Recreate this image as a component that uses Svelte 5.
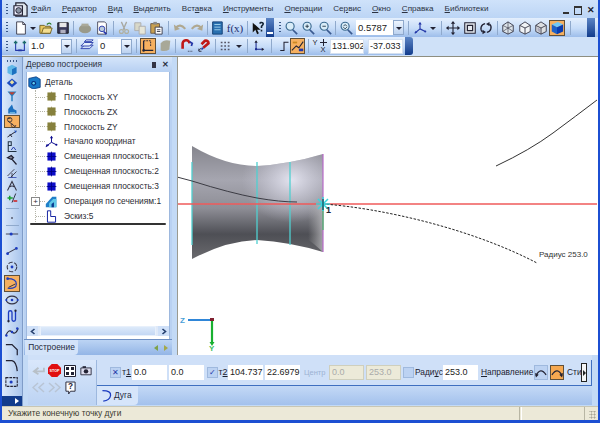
<script>
	// icon bodies, all on a 16x16 box
	const icons = {
		app: '<path d="M3 1h9l3 3v11H3z" fill="#dfe6ee" stroke="#223" stroke-width="1.3"/><path d="M1 4h9v10H1z" fill="#eef" stroke="#223" stroke-width="1.3"/><circle cx="6" cy="9" r="3" fill="#8a94a4" stroke="#223"/>',
		new: '<path d="M3 1h7l3 3v11H3z" fill="#fff" stroke="#334"/><path d="M10 1v3h3" fill="none" stroke="#334"/>',
		open: '<path d="M1 5h5l1 1h6v8H1z" fill="#e8c860" stroke="#6a5a20"/><path d="M3 14l2-6h10l-2 6z" fill="#f4de90" stroke="#6a5a20"/><path d="M9 4q3-3 5 0" fill="none" stroke="#2a7a2a" stroke-width="1.5"/>',
		save: '<path d="M2 2h12v12H2z" fill="#3a3a5a" stroke="#111"/><path d="M4 2h8v5H4z" fill="#e8e8e8"/><path d="M5 10h6v4H5z" fill="#b0b0c0"/>',
		gray: '<ellipse cx="8" cy="9" rx="7" ry="5" fill="#9a9a8a"/><path d="M4 6h8V3H4z" fill="#aaa99a"/>',
		preview: '<path d="M3 1h8l2 2v12H3z" fill="#fff" stroke="#445"/><circle cx="8" cy="9" r="3.2" fill="#bcd" stroke="#23a"/><path d="M10 12l3 3" stroke="#23a" stroke-width="2"/>',
		cut: '<path d="M5 1l4 9M11 1L7 10" stroke="#a8a8a0" stroke-width="1.5"/><circle cx="5" cy="12" r="2.2" fill="none" stroke="#b0b0a0" stroke-width="1.4"/><circle cx="11" cy="12" r="2.2" fill="none" stroke="#b0b0a0" stroke-width="1.4"/>',
		copy: '<path d="M2 2h7v9H2z" fill="#d8d8c8" stroke="#aaa"/><path d="M7 6h7v9H7z" fill="#e6e6d8" stroke="#aaa"/>',
		paste: '<path d="M2 3h10v11H2z" fill="#c8a050" stroke="#654"/><path d="M5 1h4v3H5z" fill="#888"/><path d="M7 7h8v8H7z" fill="#fff" stroke="#334"/><path d="M9 10h4M9 12h4" stroke="#334"/>',
		undo: '<path d="M3 8q5-6 11 1" fill="none" stroke="#b0a890" stroke-width="2.4"/><path d="M1 4l1 7 6-2z" fill="#b0a890"/>',
		redo: '<path d="M13 8q-5-6-11 1" fill="none" stroke="#b0a890" stroke-width="2.4"/><path d="M15 4l-1 7-6-2z" fill="#b0a890"/>',
		book: '<path d="M3 1h11v14H3z" fill="#2a70b0" stroke="#0f3a70"/><path d="M5 4h7M5 7h7M5 10h7" stroke="#a8d8f0"/>',
		help: '<path d="M2 2v11l3-3 2 5 2-1-2-4h4z" fill="#111"/><path d="M10 3q1-2 3-1t0 3l-1 1v2" fill="none" stroke="#123" stroke-width="1.8"/><path d="M12 10v2" stroke="#123" stroke-width="1.8"/>',
		zoom: '<circle cx="7" cy="6" r="4.6" fill="#d8ecf8" stroke="#3a6a90" stroke-width="1.3"/><path d="M10 10l5 5" stroke="#3a5a90" stroke-width="2"/>',
		zoomin: '<circle cx="7" cy="6" r="4.6" fill="#d8ecf8" stroke="#3a6a90" stroke-width="1.3"/><path d="M10 10l5 5" stroke="#3a5a90" stroke-width="2"/><path d="M5 6h4M7 4v4" stroke="#234"/>',
		zoomout: '<circle cx="7" cy="6" r="4.6" fill="#d8ecf8" stroke="#3a6a90" stroke-width="1.3"/><path d="M10 10l5 5" stroke="#3a5a90" stroke-width="2"/><path d="M5 6h4" stroke="#234"/>',
		zoomall: '<circle cx="7" cy="6" r="4.6" fill="#d8ecf8" stroke="#3a6a90" stroke-width="1.3"/><path d="M10 10l5 5" stroke="#3a5a90" stroke-width="2"/><path d="M5 6l2-2 2 2M5 7l2 2 2-2" fill="none" stroke="#234"/>',
		axes: '<path d="M8 9V2M8 9l6 3M8 9l-6 5" stroke="#2438a8" stroke-width="1.3"/><path d="M6 4l2-3 2 3zM2 14l1-3 2 2z" fill="#2438a8"/><circle cx="14" cy="12" r="1.2" fill="#2438a8"/>',
		move: '<path d="M8 1v14M1 8h14" stroke="#223" stroke-width="1.3"/><path d="M8 0l2.5 3h-5zM8 16l2.5-3h-5zM0 8l3-2.5v5zM16 8l-3-2.5v5z" fill="#223"/>',
		box: '<path d="M2 2h12v12H2z" fill="#e6eaf0" stroke="#223" stroke-width="1.2"/><path d="M5 5h6v6H5z" fill="none" stroke="#223" stroke-width="1.4"/>',
		rotate: '<path d="M7 3a5.5 5.5 0 0 0-3 9.5M9 13a5.5 5.5 0 0 0 3-9.5" fill="none" stroke="#223" stroke-width="1.5"/><path d="M12 1v5l-4-2.5zM4 15v-5l4 2.5z" fill="#223"/>',
		cube1: '<path d="M2 5l6-4 6 4v7l-6 3-6-3z" fill="#dde4ea" stroke="#334" /><path d="M2 5l6 3 6-3M8 8v7M2 12l6-4 6 4M8 1v7" fill="none" stroke="#334" stroke-width=".7"/>',
		cube2: '<path d="M2 5l6-4 6 4v7l-6 3-6-3z" fill="#f0f3f6" stroke="#334"/><path d="M2 5l6 3 6-3M8 8v7" fill="none" stroke="#334"/>',
		cube3: '<path d="M2 5l6-4 6 4v7l-6 3-6-3z" fill="#dcdfe2" stroke="#334"/><path d="M2 5l6 3 6-3M8 8v7" fill="none" stroke="#334"/><path d="M4 7l3 2v4l-3-2z" fill="#aab"/>',
		cube4: '<path d="M2 4l7-3 6 3-7 3z" fill="#70c8f8"/><path d="M2 4l6 3v8l-6-3z" fill="#1c60c8"/><path d="M8 7l7-3v8l-7 3z" fill="#0a3cb0"/>',
		dim: '<path d="M3 5v8h10V5" fill="none" stroke="#2438a8" stroke-width="1.2"/><path d="M1 4h4M3 2v4M11 4h4M13 2v4" stroke="#1a6a6a" stroke-width="1.6"/><path d="M6 13h4" stroke="#2438a8" stroke-width="2"/>',
		layers: '<path d="M1 11l4-4h10l-4 4z" fill="#d0e0f8" stroke="#2438a8"/><path d="M1 8l4-4h10l-4 4z" fill="#e4eefc" stroke="#2438a8"/><path d="M5 3l2-2h8l-2 2z" fill="#e4eefc" stroke="#2438a8"/>',
		grid: '<path d="M3 2v11h11" fill="none" stroke="#223" stroke-width="1.5"/><path d="M3 2h8v7" fill="none" stroke="#223" stroke-dasharray="2 1"/><circle cx="3" cy="13" r="1.5" fill="#223"/>',
		graySolid: '<path d="M3 5q4-5 11-3l-1 10q-5 3-10 1z" fill="#a8a898"/>',
		mag1: '<path d="M3 11V6a4 4 0 0 1 8-1" fill="none" stroke="#c01818" stroke-width="3"/><path d="M11 3l3 2-1 3" stroke="#2438a8" stroke-width="2" fill="none"/><path d="M9 14h1M11 14h1M13 14h1" stroke="#223"/>',
		mag2: '<path d="M6 10l6-5a3 3 0 0 0-4-3l-4 4" fill="none" stroke="#c01818" stroke-width="3"/><path d="M1 13l3-3M1 11v3h3" fill="none" stroke="#223"/><path d="M4 12l2-2" stroke="#2438a8" stroke-width="2"/>',
		dots: '<path d="M2 4h2M6 4h2M10 4h2M2 8h2M6 8h2M10 8h2M2 12h2M6 12h2M10 12h2" stroke="#556" stroke-width="1.8"/>',
		ortho: '<path d="M5 2v10h9" fill="none" stroke="#1a2a90" stroke-width="1.3"/><path d="M3 4l2-3 2 3zM12 10l3 2-3 2z" fill="#223"/><circle cx="5" cy="12" r="1.4" fill="#1a2a90"/>',
		step: '<path d="M3 14h5V3h6" fill="none" stroke="#223" stroke-width="1.4"/>',
		param: '<path d="M1 13l5-5 3 2 5-7" fill="none" stroke="#223" stroke-width="1.2"/><path d="M2 3h5v2H2z" fill="#c82"/><path d="M9 11h5v3H9z" fill="#2438a8"/>',
		// left strip
		s1: '<path d="M2 4l6-3 6 3v8l-6 3-6-3z" fill="#60b8e8"/><path d="M8 7l6-3v8l-6 3z" fill="#1c70c0"/>',
		s2: '<path d="M1 8l7-6 7 6-7 6z" fill="#1c4cc0"/><path d="M5 7l3-3 3 3-3 3z" fill="#e8e0a0"/>',
		s3: '<path d="M2 2h12L9 8v7H7V8z" fill="#2a80c0"/><path d="M4 3h8l-3 3H7z" fill="#c04030"/>',
		s4: '<path d="M3 14V8l5-6 2 6 4 2v4z" fill="#1c70c0"/><path d="M5 13h7" stroke="#a0e0f0"/>',
		s5: '<path d="M2 3h4M3 7l9 7" stroke="#223" stroke-width="1.2"/><circle cx="5" cy="5" r="3" fill="none" stroke="#223"/><path d="M8 10a3 3 0 1 0 5 2" fill="none" stroke="#223"/>',
		s6: '<path d="M2 12l12-8M5 8l3 4" stroke="#223" stroke-width="1.3"/><path d="M11 3l3 1-1 3z" fill="#1c4cc0"/>',
		s7: '<path d="M3 1h4v5H3zM3 6v8h11" fill="none" stroke="#234" stroke-width="1.4"/><path d="M7 12l3-4 3 4" stroke="#2438a8" fill="none" stroke-width="1.3"/>',
		s8: '<path d="M2 5l5-3 3 3-3 2zM8 7l6 7" stroke="#223" stroke-width="1.6" fill="#889"/>',
		s9: '<path d="M2 12L11 3M6 14l8-8" stroke="#445" stroke-width="1.3"/><path d="M3 14h11" stroke="#2438a8"/><path d="M8 8v6" stroke="#223"/>',
		s10: '<path d="M2 14L8 2l6 12M5 9q3-2 6 0" fill="none" stroke="#334" stroke-width="1.4"/>',
		s11: '<path d="M2 8h7M5 5v6" stroke="#18a030" stroke-width="2"/><path d="M8 14L13 2" stroke="#223" stroke-width="1.2"/><path d="M10 12h5" stroke="#d01818" stroke-width="2"/>',
		s12: '<path d="M7 7h2v2H7z" fill="#334"/>',
		s13: '<path d="M1 8h14" stroke="#334"/><circle cx="7" cy="8" r="1.8" fill="#1c3cc0"/>',
		s14: '<path d="M2 11L13 5" stroke="#334" stroke-width="1.2"/><circle cx="3" cy="11" r="1.6" fill="#1c3cc0"/><circle cx="13" cy="5" r="1.6" fill="#1c3cc0"/>',
		s15: '<circle cx="8" cy="8" r="5.5" fill="none" stroke="#334" stroke-dasharray="5 2" stroke-width="1.2"/><circle cx="8" cy="8" r="1.6" fill="#1c3cc0"/>',
		s16: '<path d="M3 3q10 0 10 6T3 14" fill="none" stroke="#1c3cc0" stroke-width="1.3"/><circle cx="3" cy="3" r="1.5" fill="#1c3cc0"/><path d="M4 13l8-4" stroke="#223"/>',
		s17: '<ellipse cx="8" cy="8" rx="6.5" ry="4.5" fill="none" stroke="#334" stroke-width="1.3"/><circle cx="8" cy="8" r="1.5" fill="#1c3cc0"/><circle cx="1.5" cy="8" r="1.2" fill="#1c3cc0"/><circle cx="14.5" cy="8" r="1.2" fill="#1c3cc0"/>',
		s18: '<path d="M4 14V4q0-2 2-2t2 2v8q0 2 2 2t2-2V2" fill="none" stroke="#1c3cc0" stroke-width="1.5"/><circle cx="4" cy="14" r="1.3" fill="#223"/><circle cx="12" cy="2" r="1.3" fill="#223"/>',
		s19: '<path d="M1 12q3-8 7-4t7-4" fill="none" stroke="#223" stroke-width="1.3"/><circle cx="1.6" cy="12" r="1.4" fill="#1c3cc0"/><circle cx="8" cy="8" r="1.4" fill="#1c3cc0"/><circle cx="14" cy="4" r="1.4" fill="#1c3cc0"/>',
		s20: '<path d="M1 3h7l6 6v6" fill="none" stroke="#223" stroke-width="1.4"/>',
		s20b: '<path d="M1 3h7q5 1 6 12" fill="none" stroke="#223" stroke-width="1.4"/>',
		s21: '<path d="M1 3h13v10H1z" fill="none" stroke="#223" stroke-width="1.2" stroke-dasharray="3 1"/><circle cx="7" cy="8" r="1.8" fill="#1c3cc0"/>',
		// tree
		plane: '<path d="M3 3h10v10H3z" fill="#86803c"/><path d="M2 8h12M8 2v12" stroke="#86803c" stroke-width=".8"/>',
		offset: '<path d="M3 3h10v10H3z" fill="#0c0cc8"/><path d="M2 8h12M8 2v12" stroke="#000080"/>',
		origin: '<path d="M8 9V2M8 9l6 3M8 9l-7 5" stroke="#0c0c90" stroke-width="1.2"/><path d="M6 4l2-3 2 3zM1 15l1-4 3 2z" fill="#0c0c90"/><circle cx="14" cy="12" r="1.3" fill="#0c0c90"/>',
		loft: '<path d="M1 15V11L9 2h5v13z" fill="#1f7fc8"/><path d="M5 15V10l5-5h4v10z" fill="#60c8e8"/><path d="M8 15v-4l3-2v6z" fill="#0a3a90"/>',
		sketch: '<path d="M3 1h4v7h6v7H3z" fill="none" stroke="#1020a0" stroke-width="1.2"/>',
		part: '<path d="M1 3l9-2 5 3v10l-9 2-5-3z" fill="#1878c8" stroke="#0a3a80"/><circle cx="7" cy="9" r="3" fill="#083080"/><circle cx="7" cy="9" r="1.5" fill="#60d0f0"/>',
		arc: '<path d="M3 2q11 0 10 6t-9 7" fill="none" stroke="#1c3cc0" stroke-width="1.6"/>'
	};

	const menu = [
		['Ф', 'айл'], ['Р', 'едактор'], ['В', 'ид'], ['В', 'ыделить'], ['Вст', 'авка', 'а'], ['И', 'нструменты'],
		['О', 'перации'], ['Се', 'рвис', 'р'], ['О', 'кно'], ['С', 'правка'], ['Б', 'иблиотеки']
	];

	// s = separator, d = dropdown arrow, g = grip, x = blank
	const bar1 = [
		['g', 5], ['x', 3], ['new', 18], ['d', 6], ['open', 20], ['save', 14], ['s', 6], ['gray', 18], ['preview', 16], ['s', 6],
		['cut', 16], ['copy', 16], ['paste', 16], ['s', 8], ['undo', 16], ['redo', 18], ['s', 2], ['book', 18], ['fx', 18], ['s', 6],
		['help', 16]
	];
	const bar1b = [['zoom', 17], ['zoomin', 17], ['zoomout', 17], ['s', 4], ['x', 2], ['zoomall', 14], ['x', 3]];
	const bar1c = [
		['s', 8], ['axes', 16], ['d', 10], ['s', 6], ['move', 17], ['box', 17], ['rotate', 16], ['s', 6],
		['cube1', 16], ['cube2', 17], ['cube3', 16], ['cube4', 16, true], ['s', 10]
	];
	const bar2a = [['g', 5], ['x', 1], ['dim', 19]];
	const bar2b = [['s', 8], ['layers', 14], ['x', 4]];
	const bar2c = [
		['s', 8], ['grid', 16, true], ['x', 1], ['graySolid', 16], ['s', 5], ['mag1', 17], ['mag2', 19], ['s', 3], ['dots', 18], ['d', 8], ['s', 9],
		['ortho', 13], ['s', 13], ['step', 12], ['param', 15, true], ['s', 6]
	];

	const stripTop = ['s1', 's2', 's3', 's4', 's5', 's6', 's7', 's8', 's9', 's10', 's11'];
	const stripLow = ['s13', 's14', 's15', 's16', 's17', 's18', 's19', 's20', 's20b', 's21'];

	const tree = [
		['plane', 'Плоскость XY'], ['plane', 'Плоскость ZX'], ['plane', 'Плоскость ZY'], ['origin', 'Начало координат'],
		['offset', 'Смещенная плоскость:1'], ['offset', 'Смещенная плоскость:2'], ['offset', 'Смещенная плоскость:3'],
		['loft', 'Операция по сечениям:1', true], ['sketch', 'Эскиз:5']
	];
</script>

{#snippet ic(name, size = 14)}
	<svg width={size} height={size} viewBox="0 0 16 16">{@html icons[name]}</svg>
{/snippet}

{#snippet tool(t)}
	{#if t[0] === 's'}
		<span class="sep" style="width:{t[1]}px"></span>
	{:else if t[0] === 'g'}
		<span class="grip" style="width:{t[1]}px"></span>
	{:else if t[0] === 'd'}
		<span class="drop" style="width:{t[1]}px"></span>
	{:else if t[0] === 'x'}
		<span class="blank" style="width:{t[1]}px"></span>
	{:else if t[0] === 'fx'}
		<span class="fx" style="width:{t[1]}px">f(x)</span>
	{:else}
		<span class={['tb', t[2] && 'on']} style="width:{t[1]}px">{@render ic(t[0])}</span>
	{/if}
{/snippet}

{#snippet combo(value, w)}
	<span class="combo"><span class="field" style="width:{w}px">{value}</span><span class="cbtn"></span></span>
{/snippet}

<div class="win">
	<header class="menubar">
		<span class="grip g1"></span>
		<span class="appicon">{@render ic('app', 15)}</span>
		<nav class="menu">
			{#each menu as m}
				{#if m[2] === 'а'}
					<span>Вст<u>а</u>вка</span>
				{:else if m[2] === 'р'}
					<span>Се<u>р</u>вис</span>
				{:else}
					<span><u>{m[0]}</u>{m[1]}</span>
				{/if}
			{/each}
		</nav>
		<div class="winbtns"><span class="wmin"></span><span class="wres"></span><span class="wx">✕</span></div>
	</header>

	<div class="bar bar1">
		{#each bar1 as t}{@render tool(t)}{/each}
		<span class="chev"></span>
		<span class="grip g2"></span>
		{#each bar1b as t}{@render tool(t)}{/each}
		{@render combo('0.5787', 37)}
		{#each bar1c as t}{@render tool(t)}{/each}
		<span class="end endr"></span>
	</div>

	<div class="bar2row">
		<div class="bar bar2">
			{#each bar2a as t}{@render tool(t)}{/each}
			{@render combo('1.0', 32)}
			{#each bar2b as t}{@render tool(t)}{/each}
			{@render combo('0', 23)}
			{#each bar2c as t}{@render tool(t)}{/each}
			<span class="yx"><span>Y</span><svg width="7" height="7" viewBox="0 0 7 7"><path d="M3.5 0v7M0 3.5h7" stroke="#223"/></svg><span class="xl">X</span></span>
			<span class="field coord c1">131.902</span>
			<span class="field coord c2">-37.033</span>
			<span class="end"></span>
		</div>
	</div>

	<div class="body">
		<aside class="strip">
			<div class="stripitems">
				<span class="dots"></span>
				{#each stripTop as s}
					<span class={['sb', s === 's5' && 'on']}>{@render ic(s, 12)}</span>
				{/each}
				<span class="hsep h1"></span>
				<span class="sb">{@render ic('s12', 12)}</span>
				<span class="hsep h2"></span>
				{#each stripLow as s}
					<span class={['sb', 'big', s === 's16' && 'on']}>{@render ic(s, 14)}</span>
				{/each}
			</div>
			<div class="stripfoot">
				<span class="footarr"></span>
			</div>
		</aside>

		<div class="work">
			<div class="top">
				<section class="panel">
					<div class="ptitle">
						<span>Дерево построения</span>
						<span class="pbtns"><b class="pin"></b><b class="px">✕</b></span>
					</div>
					<div class="treebox">
						<div class="tree">
							<div class="root">{@render ic('part', 13)}<span>Деталь</span></div>
							<ul>
								{#each tree as n}
									<li>
										{#if n[2]}<span class="plus">+</span>{/if}
										<span class="ticon">{@render ic(n[0], 13)}</span>
										<span>{n[1]}</span>
									</li>
								{/each}
							</ul>
							<div class="rule"></div>
						</div>
						<div class="hscroll">
							<span class="sarrow"><svg width="6" height="7" viewBox="0 0 6 7"><path d="M4.5 1L1.5 3.5 4.5 6" fill="none" stroke="#26406e" stroke-width="1.6"/></svg></span>
							<span class="thumb"></span>
							<span class="sarrow"><svg width="6" height="7" viewBox="0 0 6 7"><path d="M1.5 1L4.5 3.5 1.5 6" fill="none" stroke="#26406e" stroke-width="1.6"/></svg></span>
						</div>
					</div>
					<div class="tabs">
						<span class="tab">Построение</span>
						<span class="tabnav"><i class="tl"></i><i class="tr"></i></span>
					</div>
				</section>

				<main class="canvas">
					<svg viewBox="177 57 423 303" width="423" height="303">
						<defs>
							<linearGradient id="sh" x1="0" y1="0" x2="0" y2="1">
								<stop offset="0" stop-color="#85858d" />
								<stop offset=".3" stop-color="#a6a6b0" />
								<stop offset=".55" stop-color="#8e8e96" />
								<stop offset=".78" stop-color="#4e4f55" />
								<stop offset="1" stop-color="#6a6a6e" />
							</linearGradient>
							<radialGradient id="hl" cx=".76" cy=".3" r=".38">
								<stop offset="0" stop-color="#e6e6f2" stop-opacity=".95" />
								<stop offset="1" stop-color="#c8c8d8" stop-opacity="0" />
							</radialGradient>
							<linearGradient id="lo" x1="0" y1="0" x2="1" y2="0">
								<stop offset=".55" stop-color="#aaa" stop-opacity="0" />
								<stop offset="1" stop-color="#b8b8bc" stop-opacity=".8" />
							</linearGradient>
						</defs>
						<path d="M192 146Q226 166 257 166Q290 164 323 154V252Q290 242 257 240Q226 241 192 259Z" fill="url(#sh)" />
						<path d="M192 146Q226 166 257 166Q290 164 323 154V252Q290 242 257 240Q226 241 192 259Z" fill="url(#hl)" />
						<path d="M290 230Q305 235 323 252V205H290Z" fill="url(#lo)" />
						<path d="M192 162V245M257 162V244M290 162V245" stroke="#50cfd0" stroke-width="1.3" fill="none" />
						<path d="M323 154V252" stroke="#b86ac8" stroke-width="1.2" />
						<path d="M323 204V230" stroke="#40c060" stroke-width="1.2" />
						<path d="M177 177L192 181Q230 193 257 198Q280 202 297 202" stroke="#3c3c44" stroke-width="1" fill="none" />
						<path d="M177 204H597" stroke="#ef5a5a" stroke-width="1.3" />
						<path d="M496 166Q530 150 553 133T597 100" stroke="#333" stroke-width="1" fill="none" />
						<path d="M323 204C380 208 470 228 537 263" stroke="#222" stroke-width="1" stroke-dasharray="2.5 1.5" fill="none" />
						<path d="M316 204H330M323 197V211M318 199L328 209M328 199L318 209" stroke="#35d8e0" stroke-width="1.5" />
						<path d="M323 199V210" stroke="#123" stroke-width="1" />
						<text x="326" y="213" class="snap">1</text>
						<text x="539" y="257" class="lbl">Радиус 253.0</text>
						<path d="M188 320H211" stroke="#2f86d8" stroke-width="2" />
						<path d="M212 320V343" stroke="#18b030" stroke-width="2.2" />
						<path d="M209.5 342L212 346 214.5 342Z" fill="#18b030" />
						<rect x="210" y="318" width="4" height="3" fill="#802030" />
						<text x="180" y="323" class="ax z">Z</text>
						<text x="209" y="351" class="ax y">Y</text>
					</svg>
				</main>
			</div>

			<section class="props">
				<div class="pleft">
					<div class="prow">
						<svg width="14" height="10" viewBox="0 0 15 11"><path d="M14 2v4H5M8 2L3 6l5 3" fill="none" stroke="#b8c0c8" stroke-width="2"/></svg>
						<svg width="13" height="13" viewBox="0 0 14 14"><path d="M4 0h6l4 4v6l-4 4H4l-4-4V4z" fill="#e01010"/><text x="7" y="8.5" class="stop">STOP</text></svg>
						<svg width="12" height="12" viewBox="0 0 12 12"><path d="M.5.5h11v11H.5z" fill="#fff" stroke="#223"/><path d="M2 2h3v3H2zM7 2h3v3H7zM2 7h3v3H2zM7 7h3v3H7z" fill="#223"/></svg>
						<svg width="12" height="11" viewBox="0 0 14 12"><path d="M1 3h12v8H1z" fill="#dde" stroke="#223"/><circle cx="7" cy="7" r="2.6" fill="#223"/><path d="M3 1h4v2H3z" fill="#223"/></svg>
					</div>
					<div class="prow">
						<svg width="13" height="11" viewBox="0 0 13 11"><path d="M6 1L1 5.500 6 10M12 1L7 5.500 12 10" fill="none" stroke="#b8c4d4" stroke-width="1.5"/></svg>
						<svg width="13" height="11" viewBox="0 0 13 11"><path d="M1 1L6 5.500 1 10M7 1L12 5.500 7 10" fill="none" stroke="#b8c4d4" stroke-width="1.5"/></svg>
						<svg width="11" height="14" viewBox="0 0 12 15"><path d="M1 1h10v10H6l-2 3v-3H1z" fill="#fff" stroke="#223"/><text x="6" y="9" class="q">?</text></svg>
					</div>
				</div>
				<div class="pright">
					<div class="fields">
						<span class="check">✕</span><span class="t">т<u>1</u></span>
						<span class="field pf">0.0</span>
						<span class="field pf">0.0</span>
						<span class="blank b1"></span>
						<span class="check">✓</span><span class="t t2">т<u>2</u></span>
						<span class="field pf">104.737</span>
						<span class="field pf">22.6979</span>
						<span class="dis">Центр</span>
						<span class="field pf off">0.0</span>
						<span class="field pf off">253.0</span>
						<span class="check"></span>
						<span class="lab rad">Ради<u>у</u>с</span>
						<span class="field pf">253.0</span>
						<span class="lab dirl"><u>Н</u>аправление</span>
						<span class="dir">
							<svg width="13" height="10" viewBox="0 0 13 10"><path d="M1 8Q6-2 12 7" fill="none" stroke="#223" stroke-width="1.4"/><path d="M0 5l1 5 3-3z" fill="#223"/></svg>
						</span>
						<span class="dir on">
							<svg width="13" height="10" viewBox="0 0 13 10"><path d="M1 7Q7-2 12 8" fill="none" stroke="#223" stroke-width="1.4"/><path d="M13 5l-1 5-3-3z" fill="#223"/></svg>
						</span>
						<span class="lab sti">Сти</span>
						<span class="more"></span>
					</div>
					<div class="ptabs">
						<span class="ptab">{@render ic('arc', 13)}Дуга</span>
					</div>
				</div>
			</section>
		</div>
	</div>

	<footer class="status">
		<span class="msg">Укажите конечную точку дуги</span>
		<span class="cell"></span>
		<span class="resize"></span>
	</footer>
</div>

<style>
	:global(body) {
		margin: 0;
		overflow: hidden;
	}

	.win {
		width: 600px;
		height: 423px;
		box-sizing: border-box;
		display: flex;
		flex-direction: column;
		overflow: hidden;
		border: solid #1c4fd2;
		border-width: 0 2px 3px;
		background: #c3daf6;
		font: 8.4px/1 "Liberation Sans", Arial, sans-serif;
		color: #1c2230;
	}

	.menubar {
		height: 18px;
		display: flex;
		align-items: center;
		flex: none;
		background: linear-gradient(#cfe2fa, #bcd5f5);
	}

	.g1 {
		margin-left: 3px;
		width: 4px;
	}

	.appicon {
		display: flex;
		width: 17px;
		justify-content: center;
		margin-left: 3px;
	}

	.menu {
		display: flex;
		gap: 11px;
		margin-left: 2px;
		font-size: 8.1px;
		color: #2b3242;
	}

	.winbtns {
		margin-left: auto;
		display: flex;
		align-items: center;
		gap: 5px;
		padding-right: 3px;
		margin-top: 3px;
	}

	.wmin {
		width: 6px;
		height: 2px;
		background: #333;
		margin-top: 5px;
	}

	.wres {
		width: 6px;
		height: 6px;
		border: 1px solid #333;
		border-top-width: 2px;
	}

	.wx {
		font-size: 9px;
		font-weight: 700;
	}

	.bar {
		display: flex;
		align-items: center;
		flex: none;
		background: linear-gradient(#e4effd, #c6dcf8 55%, #9dbdea);
	}

	.bar1 {
		height: 19px;
		padding-left: 2px;
	}

	.bar2row {
		height: 20px;
		flex: none;
		background: #cfe1f8;
		border-bottom: 1px solid #8e8e80;
		box-sizing: border-box;
		display: flex;
		align-items: center;
		padding-bottom: 1px;
	}

	.bar2 {
		height: 18px;
		padding-left: 2px;
		box-sizing: border-box;
		border-radius: 0 3px 3px 0;
	}

	.blank {
		flex: none;
	}

	.tb {
		display: flex;
		justify-content: center;
		align-items: center;
		height: 16px;
		flex: none;
		box-sizing: border-box;
	}

	.tb.on {
		background: #f6b060;
		box-shadow: inset 0 0 0 1px #60503a;
	}

	.sep {
		flex: none;
		height: 14px;
		background: linear-gradient(#8fa9cc, #8fa9cc) center / 1px 100% no-repeat;
	}

	.grip {
		flex: none;
		height: 13px;
		background: radial-gradient(circle, #3a5888 45%, transparent 50%) center top / 2px 3px repeat-y;
	}

	.g2 {
		width: 5px;
		margin-left: 3px;
	}

	.drop {
		flex: none;
		height: 12px;
		position: relative;
	}

	.drop::after,
	.cbtn::after {
		content: '';
		position: absolute;
		left: 50%;
		top: 50%;
		margin: -1px 0 0 -3px;
		border: 3px solid transparent;
		border-top: 3px solid #223;
		border-bottom: 0;
	}

	.fx {
		flex: none;
		font: 11px "Liberation Serif", serif;
		color: #1c2c70;
		text-align: center;
	}

	.chev {
		width: 8px;
		height: 19px;
		flex: none;
		background: linear-gradient(#5b84c4, #123c8c);
		position: relative;
	}

	.chev::after {
		content: '';
		position: absolute;
		left: 1px;
		bottom: 3px;
		width: 6px;
		height: 2px;
		background: #fff;
	}

	.combo {
		display: flex;
		flex: none;
		height: 15px;
	}

	.field {
		background: #fff;
		box-sizing: border-box;
		height: 15px;
		display: flex;
		align-items: center;
		padding-left: 2px;
		font-size: 9.5px;
		color: #222;
		overflow: hidden;
		white-space: nowrap;
		flex: none;
	}

	.cbtn {
		width: 11px;
		position: relative;
		background: linear-gradient(#eef5fe, #bcd2f0);
		border: 1px solid #8ea8cc;
		box-sizing: border-box;
	}

	.yx {
		width: 19px;
		height: 15px;
		flex: none;
		display: grid;
		grid-template-columns: 8px 8px;
		justify-items: center;
		align-items: center;
		font-size: 7.500px;
	}

	.xl {
		grid-column: 2;
	}

	.coord {
		border: 1px solid #d4e0f0;
		font-size: 9px;
		padding-left: 1px;
	}

	.c1 {
		width: 34px;
		margin-right: 4px;
	}

	.c2 {
		width: 35px;
		margin-right: 2px;
	}

	.end {
		width: 8px;
		height: 18px;
		flex: none;
		background: linear-gradient(#5b84c4, #123c8c);
		border-radius: 0 3px 3px 0;
	}

	.endr {
		margin-left: auto;
		margin-right: 3px;
		border-radius: 0;
		height: 19px;
	}

	.body {
		flex: 1;
		display: flex;
		min-height: 0;
	}

	.strip {
		width: 21px;
		flex: none;
		display: flex;
		flex-direction: column;
		background: linear-gradient(90deg, #dce9fb, #a9c5ec);
		border-right: 1px solid #7f9cc8;
		box-sizing: border-box;
	}

	.stripitems {
		flex: 1;
		display: flex;
		flex-direction: column;
		align-items: center;
	}

	.dots {
		width: 12px;
		height: 7px;
		flex: none;
		background: radial-gradient(circle, #3a5888 45%, transparent 50%) left center / 3px 2px repeat-x;
	}

	.sb {
		width: 16px;
		height: 12.8px;
		display: flex;
		align-items: center;
		justify-content: center;
		flex: none;
	}

	.sb.big {
		height: 16.4px;
	}

	.sb.on {
		background: #f6b060;
		box-shadow: inset 0 0 0 1px #60503a;
	}

	.hsep {
		width: 13px;
		flex: none;
		background: linear-gradient(#8fa9cc, #8fa9cc) center / 100% 1px no-repeat;
	}

	.h1 {
		height: 7px;
	}

	.h2 {
		height: 1.400px;
	}

	.stripfoot {
		height: 10px;
		flex: none;
		background: #123c8c;
		position: relative;
	}

	.footarr {
		position: absolute;
		right: 3px;
		top: 2px;
		border-left: 4px solid #fff;
		border-top: 3px solid transparent;
		border-bottom: 3px solid transparent;
	}

	.work {
		flex: 1;
		min-width: 0;
		display: flex;
		flex-direction: column;
	}

	.top {
		flex: 1;
		display: flex;
		min-height: 0;
	}

	.panel {
		width: 148px;
		flex: none;
		margin-left: 1px;
		display: flex;
		flex-direction: column;
		background: #b9d1f2;
	}

	.ptitle {
		height: 15px;
		flex: none;
		display: flex;
		align-items: center;
		justify-content: space-between;
		padding: 0 3px 0 2px;
		color: #2b3242;
		background: linear-gradient(#d5e5fa, #b7d0f2);
	}

	.pbtns {
		display: flex;
		align-items: center;
		gap: 6px;
	}

	.pin {
		width: 4px;
		height: 6px;
		background: #334;
		display: block;
	}

	.px {
		font-size: 8px;
	}

	.treebox {
		flex: 1;
		margin: 0 2px;
		background: #fff;
		display: flex;
		flex-direction: column;
		min-height: 0;
		border: solid #9db8de;
		border-width: 0 1px;
	}

	.tree {
		flex: 1;
		padding: 3.500px 0 0 3px;
		color: #2c2c34;
	}

	.root {
		display: flex;
		align-items: center;
		gap: 4px;
		height: 14px;
		padding-left: 1px;
		margin-left: -3px;
	}

	.tree ul {
		list-style: none;
		margin: 0 0 0 5px;
		padding: 0;
		border-left: 1px dotted #b4b4a8;
		width: 130px;
	}

	.tree li {
		height: 14.9px;
		display: flex;
		align-items: center;
		gap: 6px;
		position: relative;
		padding-left: 9px;
		white-space: nowrap;
	}

	.ticon {
		display: flex;
	}

	.tree li::before {
		content: '';
		position: absolute;
		left: 0;
		top: 7px;
		width: 9px;
		border-top: 1px dotted #b4b4a8;
	}

	.plus {
		position: absolute;
		left: -5px;
		top: 3px;
		width: 7px;
		height: 7px;
		border: 1px solid #888;
		background: #fff;
		font-size: 8px;
		line-height: 7px;
		text-align: center;
		z-index: 1;
	}

	.rule {
		height: 2px;
		background: #333;
		width: 136px;
		margin-top: -1px;
		border-radius: 1px;
		position: relative;
	}

	.hscroll {
		height: 10px;
		flex: none;
		display: flex;
		margin-bottom: 3px;
		background: #dfe9f8;
	}

	.sarrow {
		width: 11px;
		display: flex;
		align-items: center;
		justify-content: center;
		background: #cfe0f8;
		flex: none;
	}

	.thumb {
		flex: 1;
		margin: 0 2px;
		background: linear-gradient(#ddeafa, #c3d7f4);
		border: 1px solid #e8f0fb;
	}

	.tabs {
		height: 16px;
		flex: none;
		display: flex;
		align-items: center;
		justify-content: space-between;
		background: linear-gradient(#bcd4f4, #93b5e6);
		border-top: 1px solid #6d8fc4;
		box-sizing: border-box;
	}

	.tab {
		height: 15px;
		width: 53px;
		margin-left: 1px;
		display: flex;
		align-items: center;
		justify-content: center;
		background: #d3e3f9;
		border-radius: 0 0 4px 0;
		color: #1f2a40;
	}

	.tabnav {
		display: flex;
		gap: 6px;
		padding-right: 4px;
	}

	.tabnav i {
		display: block;
		border-top: 3px solid transparent;
		border-bottom: 3px solid transparent;
	}

	.tl {
		border-right: 4px solid #7ea24a;
	}

	.tr {
		border-left: 4px solid #a4a848;
	}

	.canvas {
		flex: 1;
		min-width: 0;
		margin-left: 5px;
		background: #fff;
		border-left: 1px solid #9a9a90;
		overflow: hidden;
		display: flex;
	}

	.canvas svg {
		display: block;
		flex: none;
		margin-left: -1px;
	}

	.snap {
		font: 700 9px "Liberation Sans", sans-serif;
		fill: #223;
	}

	.lbl {
		font: 8px "Liberation Sans", sans-serif;
		fill: #333;
	}

	.ax {
		font: 700 8px "Liberation Sans", sans-serif;
	}

	.z {
		fill: #4aa0d8;
	}

	.y {
		fill: #40c060;
	}

	.stop {
		font: 700 4px "Liberation Sans", sans-serif;
		fill: #fff;
		text-anchor: middle;
	}

	.q {
		font: 700 9px "Liberation Sans", sans-serif;
		fill: #223;
		text-anchor: middle;
	}

	.props {
		height: 50px;
		flex: none;
		box-sizing: border-box;
		display: flex;
		padding-top: 5px;
		margin: 0 6px 1px 5px;
		background: #cfe0f8;
	}

	.pleft {
		width: 68px;
		flex: none;
		display: flex;
		flex-direction: column;
		padding-top: 2px;
		background: linear-gradient(#d9e7fb, #bcd3f3);
	}

	.prow {
		display: grid;
		grid-template-columns: repeat(4, 16px);
		justify-items: center;
		align-items: center;
		margin-left: 2px;
		height: 17px;
	}

	.pright {
		flex: 1;
		min-width: 0;
		display: flex;
		flex-direction: column;
		border-left: 1px solid #9db8de;
	}

	.fields {
		height: 26px;
		flex: none;
		display: flex;
		align-items: center;
		background: #cfe0f8;
		border-bottom: 1px solid #3f6fc0;
		border-right: 1px solid #3f6fc0;
		box-sizing: border-box;
		padding-left: 13px;
	}

	.fields .field {
		margin-right: 2px;
	}

	.b1 {
		width: 1px;
	}

	.pf {
		width: 35px;
		font-size: 9px;
	}

	.off {
		background: #ecead9;
		color: #aaa;
		border: 1px solid #cfcfbd;
	}

	.check {
		width: 11px;
		height: 11px;
		flex: none;
		background: #bcd2f2;
		border: 1px solid #9fb9de;
		box-sizing: border-box;
		color: #2438a8;
		font-size: 8px;
		text-align: center;
		line-height: 9px;
	}

	.t {
		width: 11px;
		flex: none;
		text-align: center;
		font-size: 9px;
	}

	.t2 {
		width: 10px;
	}

	.dis {
		width: 27px;
		flex: none;
		color: #9cb2d2;
		font-size: 7.500px;
		padding-left: 2px;
		box-sizing: border-box;
	}

	.lab {
		flex: none;
		padding-left: 1px;
		box-sizing: border-box;
	}

	.rad {
		width: 29px;
	}

	.dirl {
		width: 54px;
	}

	.dir {
		width: 14px;
		height: 15px;
		flex: none;
		margin-right: 2px;
		display: flex;
		align-items: center;
		justify-content: center;
		background: #bcd2f2;
		border: 1px solid #9fb9de;
		box-sizing: border-box;
	}

	.dir.on {
		background: #f6a850;
		border-color: #60503a;
	}

	.sti {
		width: 15px;
	}

	.more {
		width: 6px;
		height: 19px;
		flex: none;
		background: #f4f4f4;
		border: 1px solid #222;
		box-sizing: border-box;
		position: relative;
	}

	.more::after {
		content: '';
		position: absolute;
		left: 1px;
		top: 6px;
		border-left: 3px solid #222;
		border-top: 3px solid transparent;
		border-bottom: 3px solid transparent;
	}

	.ptabs {
		flex: 1;
		display: flex;
		background: linear-gradient(#c4d9f6, #a3c1ec);
	}

	.ptab {
		width: 41px;
		display: flex;
		align-items: center;
		gap: 1px;
		padding-left: 3px;
		box-sizing: border-box;
		background: #d6e5fa;
		border-radius: 0 0 4px 0;
		color: #1f2a40;
	}

	.status {
		height: 14px;
		flex: none;
		display: flex;
		background: #ece9d8;
		color: #3a3a30;
		border-top: 1px solid #c8c6b4;
		box-sizing: border-box;
	}

	.msg {
		width: 518px;
		flex: none;
		padding-left: 6px;
		display: flex;
		align-items: center;
		box-sizing: border-box;
		border-right: 1px solid #b8b6a4;
	}

	.cell {
		width: 64px;
		flex: none;
		margin-left: 1px;
		border-left: 1px solid #fff;
		border-right: 1px solid #b8b6a4;
		box-sizing: border-box;
	}

	.resize {
		flex: 1;
		background: radial-gradient(circle, #a8a696 45%, transparent 50%) right bottom / 3px 3px;
		margin: 4px 2px 1px 4px;
	}
</style>
